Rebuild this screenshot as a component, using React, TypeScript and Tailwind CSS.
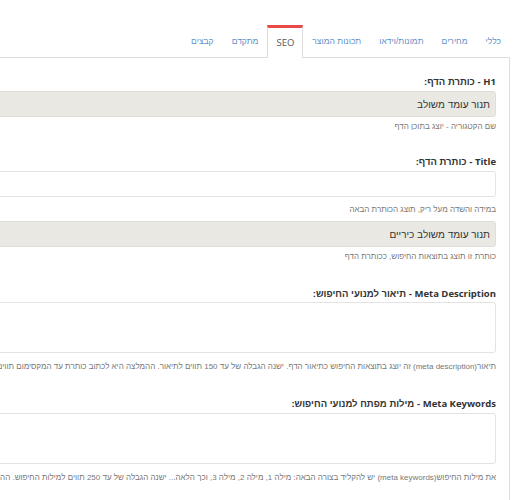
import React from "react";

const tabs = [
  { id: "general", label: "כללי" },
  { id: "prices", label: "מחירים" },
  { id: "media", label: "תמונות/וידאו" },
  { id: "specs", label: "תכונות המוצר" },
  { id: "seo", label: "SEO" },
  { id: "advanced", label: "מתקדם" },
  { id: "files", label: "קבצים" },
];

// latin words keep the Open Sans look, hebrew falls back to arial metrics
function En({ children }: { children: React.ReactNode }) {
  return <span style={{ fontFamily: '"Open Sans", sans-serif' }}>{children}</span>;
}

function Label({ children, className = "" }: { children: React.ReactNode; className?: string }) {
  return (
    <div className={`h-[16px] leading-[16px] text-[9.5px] font-bold text-[#333] ${className}`}>
      {children}
    </div>
  );
}

function Help({ children, className = "" }: { children: React.ReactNode; className?: string }) {
  return (
    <div className={`h-[12px] leading-[12px] text-[8px] text-[#777] whitespace-nowrap ${className}`}>
      {children}
    </div>
  );
}

export default function App() {
  const active = "seo";

  return (
    <div
      dir="rtl"
      className="w-[518px] h-[500px] overflow-hidden bg-white"
      style={{ fontFamily: '"Liberation Sans", Arial, sans-serif' }}
    >
      <div className="w-[1100px] mr-[8px] pt-[25px]">
        {/* Tabs */}
        <div className="flex border-b border-[#dddddd] h-[33px]">
          {tabs.map((t) =>
            t.id === active ? (
              <div
                key={t.id}
                className="h-[33px] -mb-px px-[8px] flex items-center text-[9.5px] text-[#555] bg-white border-x border-[#dddddd] border-t-[3px] border-t-[#e84a4a]"
              >
                <En>{t.label}</En>
              </div>
            ) : (
              <div
                key={t.id}
                className="h-[32px] px-[9px] flex items-center text-[8.5px] text-[#5f91c9]"
              >
                {t.label}
              </div>
            )
          )}
        </div>

        {/* Panel */}
        <div className="border-r border-[#dddddd] pr-[13px] pt-[16px] h-[460px]">
          <Label>
            <En>H1</En> - כותרת הדף:
          </Label>
          <div className="mt-px h-[26px] rounded-[3px] border border-[#dfded8] bg-[#e9e8e3] px-[5px] flex items-center text-[10px] text-[#333]">
            תנור עומד משולב
          </div>
          <Help className="mt-[4px]">שם הקטגוריה - יוצג בתוכן הדף</Help>

          <Label className="mt-[21px]">
            <En>Title</En> - כותרת הדף:
          </Label>
          <div className="mt-px h-[26px] rounded-[3px] border border-[#e3e3e3] bg-white" />
          <Help className="mt-[7px]">במידה והשדה מעל ריק, תוצג הכותרת הבאה</Help>
          <div className="mt-[5px] h-[26px] rounded-[3px] border border-[#dfded8] bg-[#e9e8e3] px-[5px] flex items-center text-[10px] text-[#333]">
            תנור עומד משולב כיריים
          </div>
          <Help className="mt-[4px]">כותרת זו תוצג בתוצאות החיפוש, ככותרת הדף</Help>

          <Label className="mt-[23px]">
            <En>Meta Description</En> - תיאור למנועי החיפוש:
          </Label>
          <div className="h-[51px] rounded-[3px] border border-[#e3e3e3] bg-white" />
          <Help className="mt-[8px]">
            תיאור(meta description) זה יוצג בתוצאות החיפוש כתיאור הדף. ישנה הגבלה של עד 150 תווים לתיאור. ההמלצה היא לכתוב כותרת עד המקסימום תווים המותרים.
          </Help>

          <Label className="mt-[23px]">
            <En>Meta Keywords</En> - מילות מפתח למנועי החיפוש:
          </Label>
          <div className="mt-px h-[51px] rounded-[3px] border border-[#e3e3e3] bg-white" />
          <Help className="mt-[8px]">
            את מילות החיפוש(meta keywords) יש להקליד בצורה הבאה: מילה 1, מילה 2, מילה 3, וכך הלאה... ישנה הגבלה של עד 250 תווים למילות החיפוש. ההמלצה היא להשתמש במילים רלוונטיות בלבד.
          </Help>
        </div>
      </div>
    </div>
  );
}
